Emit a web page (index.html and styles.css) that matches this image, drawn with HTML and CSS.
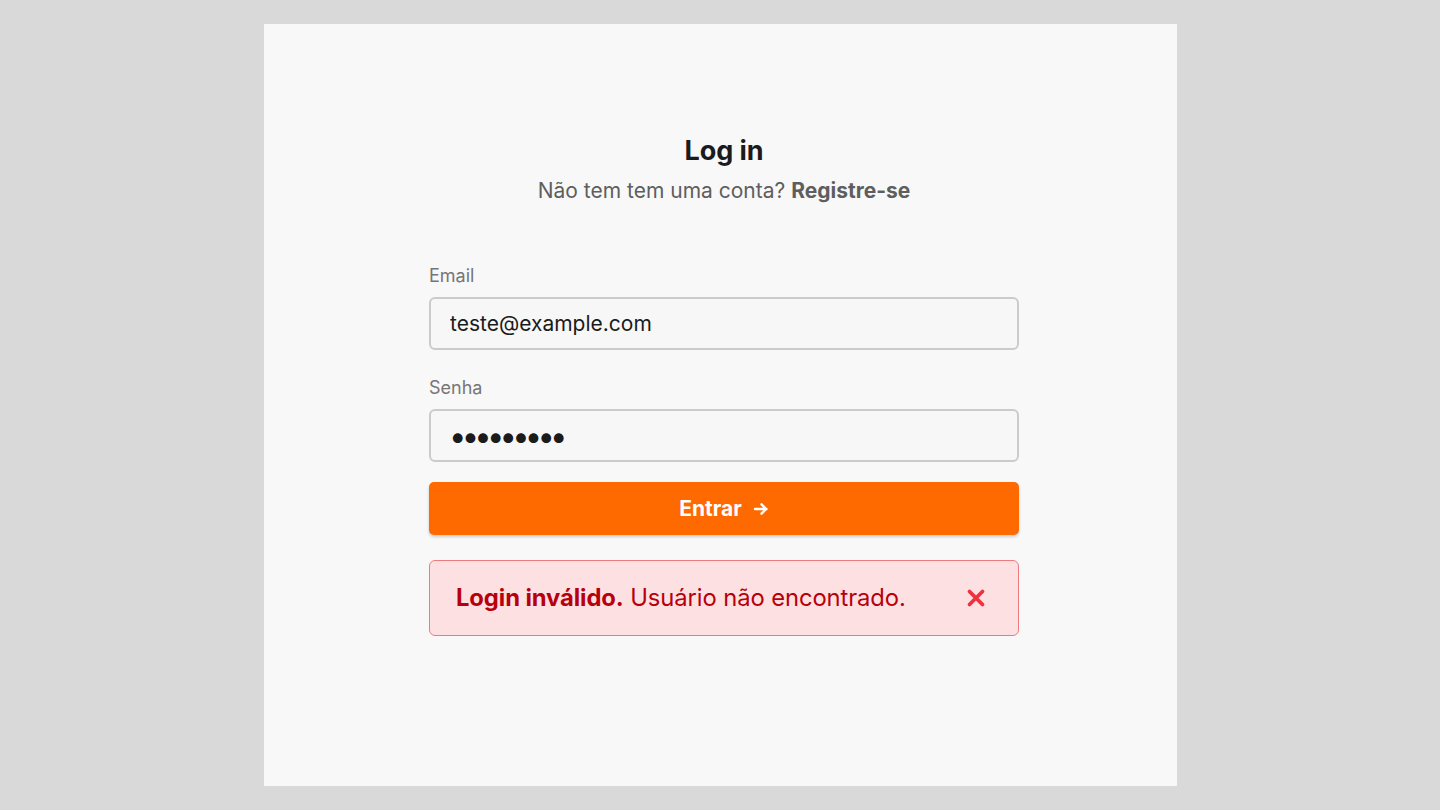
FILE: index.html
```html
<!DOCTYPE html>
<html lang="pt">
<head>
<meta charset="utf-8">
<title>Log in</title>
<link rel="stylesheet" href="styles.css">
</head>
<body>
<div class="stage">
  <main class="panel">
    <form class="form" onsubmit="return false">
      <h1 class="title">Log in</h1>
      <p class="subtitle">Não tem tem uma conta? <a href="#" class="link">Registre-se</a></p>

      <label class="label label-first" for="email">Email</label>
      <input class="field" id="email" type="email" value="teste@example.com">

      <label class="label" for="senha">Senha</label>
      <input class="field field-pass" id="senha" type="password" value="123456789">

      <button class="btn" type="submit">
        <span>Entrar</span>
        <svg class="arrow" width="16" height="16" viewBox="0 0 16 16" aria-hidden="true">
          <path d="M2 8h11.5M8.5 3.3L13.2 8l-4.7 4.7" fill="none" stroke="#fff" stroke-width="2.4" stroke-linecap="round" stroke-linejoin="round"/>
        </svg>
      </button>

      <div class="alert" role="alert">
        <p class="alert-text"><strong>Login inválido.</strong> Usuário não encontrado.</p>
        <button class="alert-close" type="button" aria-label="Fechar">
          <svg width="20" height="20" viewBox="0 0 20 20" aria-hidden="true">
            <path d="M3.5 3.5l13 13M16.5 3.5l-13 13" fill="none" stroke="#ee323e" stroke-width="3.8" stroke-linecap="round"/>
          </svg>
        </button>
      </div>
    </form>
  </main>
</div>
</body>
</html>
```
FILE: styles.css
```css
* { box-sizing: border-box; }
html, body { margin: 0; padding: 0; }
body {
  background: #d9d9d9;
  font-family: Inter, "Noto Sans", "Liberation Sans", sans-serif;
  width: 1440px;
  height: 810px;
  overflow: hidden;
}
.stage {
  padding: 24px 0 0 264px;
}
.panel {
  width: 913px;
  height: 762px;
  background: #f8f8f8;
  padding: 111px 0 0 165px;
}
.form {
  width: 590px;
  display: flex;
  flex-direction: column;
}
.title {
  margin: 0;
  font-size: 27px;
  line-height: 32px;
  font-weight: 700;
  color: #1b1b1b;
  text-align: center;
  letter-spacing: -0.1px;
}
.subtitle {
  margin: 10px 0 0;
  font-size: 21px;
  line-height: 28px;
  color: #5e5e5e;
  text-align: center;
}
.link {
  color: #5e5e5e;
  font-weight: 700;
  text-decoration: none;
}
.label {
  display: block;
  font-size: 18px;
  line-height: 24px;
  color: #767676;
  margin: 26px 0 9px;
}
.label-first { margin-top: 59px; }
.field {
  display: block;
  width: 100%;
  height: 53px;
  border: 2px solid #cbcbcb;
  border-radius: 6px;
  background: #f7f7f7;
  padding: 0 19px;
  font-family: inherit;
  font-size: 21px;
  color: #1b1b1b;
  outline: none;
}
.field-pass {
  font-size: 31px;
  letter-spacing: -4.8px;
  padding-left: 18px;
}
.btn {
  margin-top: 20px;
  height: 53px;
  width: 100%;
  border: none;
  border-radius: 5px;
  background: #ff6a00;
  color: #fff;
  font-family: inherit;
  font-size: 21px;
  font-weight: 700;
  display: flex;
  align-items: center;
  justify-content: center;
  gap: 11px;
  box-shadow: 0 2px 3px rgba(0,0,0,0.18);
  cursor: pointer;
  padding: 0;
}
.arrow { display: block; }
.alert {
  margin-top: 25px;
  height: 76px;
  border: 1.5px solid #ef7b7e;
  border-radius: 6px;
  background: #fde1e2;
  display: flex;
  align-items: center;
  justify-content: space-between;
  padding: 0 32px 0 26px;
}
.alert-text {
  margin: 0;
  font-size: 23.8px;
  line-height: 28px;
  color: #b8000c;
  letter-spacing: -0.1px;
}
.alert-text strong { font-weight: 700; }
.alert-close {
  border: none;
  background: none;
  padding: 0;
  display: flex;
  cursor: pointer;
}
```
